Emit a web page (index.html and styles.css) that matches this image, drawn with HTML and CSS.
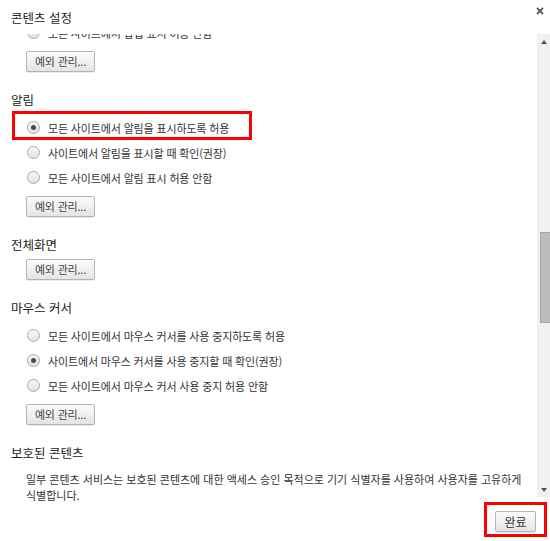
FILE: index.html
```html
<!DOCTYPE html>
<html lang="ko">
<head>
<meta charset="UTF-8" />
<title>콘텐츠 설정</title>
<link rel="stylesheet" href="styles.css">
</head>
<body>
	<div class="dialog">
		<div class="head">
			<h1 class="title">콘텐츠 설정</h1>
			<span class="close">
				<svg width="8" height="8" viewBox="0 0 8 8"><path d="M1 1L7 7M7 1L1 7" stroke="#5a5a5a" stroke-width="1.8" /></svg>
			</span>
		</div>
		<div class="scroll">
			<div class="content">
				<div class="inner">
					<ul class="radios">
						<li><span class="radio"></span>모든 사이트에서 팝업 표시 허용 안함</li>
					</ul>
					<button class="btn">예외 관리...</button>

					<h2 class="sect">알림</h2>
					<ul class="radios">
						<li class="mark"><span class="radio on"></span>모든 사이트에서 알림을 표시하도록 허용</li>
						<li><span class="radio"></span>사이트에서 알림을 표시할 때 확인(권장)</li>
						<li><span class="radio"></span>모든 사이트에서 알림 표시 허용 안함</li>
					</ul>
					<button class="btn">예외 관리...</button>

					<h2 class="sect">전체화면</h2>
					<button class="btn">예외 관리...</button>

					<h2 class="sect">마우스 커서</h2>
					<ul class="radios">
						<li><span class="radio"></span>모든 사이트에서 마우스 커서를 사용 중지하도록 허용</li>
						<li><span class="radio on"></span>사이트에서 마우스 커서를 사용 중지할 때 확인(권장)</li>
						<li><span class="radio"></span>모든 사이트에서 마우스 커서 사용 중지 허용 안함</li>
					</ul>
					<button class="btn">예외 관리...</button>

					<h2 class="sect">보호된 콘텐츠</h2>
					<p class="desc">일부 콘텐츠 서비스는 보호된 콘텐츠에 대한 액세스 승인 목적으로 기기 식별자를 사용하여 사용자를 고유하게 식별합니다.</p>
				</div>
			</div>
			<div class="bar">
				<span class="arrow up"></span>
				<div class="track"><span class="thumb"></span></div>
				<span class="arrow down"></span>
			</div>
		</div>
		<div class="foot">
			<span class="mark-done"><button class="btn btn-done">완료</button></span>
		</div>
	</div>
</body>
</html>
```

FILE: styles.css
```css
html, body {
	margin: 0;
	padding: 0;
	background-color: #fff;
}
body {
	font-family: "Noto Sans CJK KR", "Liberation Sans", sans-serif;
	font-size: 11px;
	color: #333;
}
.dialog {
	width: 550px;
	height: 541px;
	display: flex;
	flex-direction: column;
	overflow: hidden;
}
.head {
	height: 34px;
	display: flex;
	justify-content: space-between;
	align-items: flex-start;
	flex-shrink: 0;
}
.title {
	margin: 10px 0 0 11px;
	font-size: 12.5px;
	font-weight: normal;
	line-height: 16px;
	color: #222;
}
.close {
	display: block;
	width: 8px;
	height: 8px;
	margin: 7px 6px 0 0;
}
.close svg {
	display: block;
}

.scroll {
	height: 468px;
	display: flex;
	align-items: flex-start;
	flex-shrink: 0;
}
.content {
	flex: 1;
	height: 100%;
	overflow: hidden;
}
.inner {
	margin-top: -14px;
	padding-left: 11px;
}
.radios {
	margin: 0;
	padding: 0 0 0 16px;
	list-style: none;
}
.radios li {
	position: relative;
	height: 25px;
	display: flex;
	align-items: center;
	white-space: nowrap;
	letter-spacing: -0.15px;
}
.sect + .radios {
	margin-top: 7px;
}
.radio {
	width: 11px;
	height: 11px;
	border: 1px solid #a9a9a9;
	border-radius: 50%;
	background: linear-gradient(#f8f8f8, #e2e2e2);
	margin-right: 8px;
	display: flex;
	align-items: center;
	justify-content: center;
	flex-shrink: 0;
}
.radio.on::after {
	content: "";
	width: 5px;
	height: 5px;
	border-radius: 50%;
	background-color: #4a4a4a;
}
.mark::before {
	content: "";
	position: absolute;
	left: -15px;
	top: -4px;
	width: 240px;
	height: 29px;
	border: 3px solid #f00;
	box-sizing: border-box;
}

.btn {
	display: block;
	height: 21px;
	width: 69px;
	padding: 0;
	margin: 6px 0 0 15px;
	font-family: inherit;
	font-size: 11px;
	letter-spacing: -0.2px;
	color: #444;
	border: 1px solid #b4b4b4;
	border-radius: 2px;
	background: linear-gradient(#fcfcfc, #e4e4e4);
	box-shadow: 0 1px 0 rgba(0, 0, 0, 0.08);
	line-height: 19px;
}
.sect {
	margin: 20px 0 0 0;
	font-size: 12.5px;
	font-weight: normal;
	line-height: 16px;
	color: #222;
}
.desc {
	margin: 10px 0 0 15px;
	line-height: 16px;
	padding-right: 10px;
}

.bar {
	width: 13px;
	height: 463px;
	background-color: #f0f0f0;
	display: flex;
	flex-direction: column;
	align-items: center;
	flex-shrink: 0;
}
.arrow {
	width: 0;
	height: 0;
	border-left: 3.5px solid transparent;
	border-right: 3.5px solid transparent;
}
.arrow.up {
	margin-top: 6px;
	border-bottom: 4px solid #505050;
}
.arrow.down {
	margin-bottom: 5px;
	border-top: 4px solid #505050;
}
.track {
	flex: 1;
	width: 100%;
	display: flex;
	flex-direction: column;
	align-items: flex-end;
}
.thumb {
	width: 9px;
	height: 89px;
	margin-top: 188px;
	background-color: #bcbcbc;
	border: 1px solid #a6a6a6;
	border-right: 0;
}

.foot {
	flex: 1;
	display: flex;
	justify-content: flex-end;
	align-items: flex-start;
}
.mark-done {
	display: block;
	margin: 0 3px 0 0;
	padding: 6px 8px 2px;
	border: 3px solid #f00;
}
.btn-done {
	margin: 0;
	width: 41px;
	font-size: 12px;
	letter-spacing: 0;
	color: #333;
}
```
